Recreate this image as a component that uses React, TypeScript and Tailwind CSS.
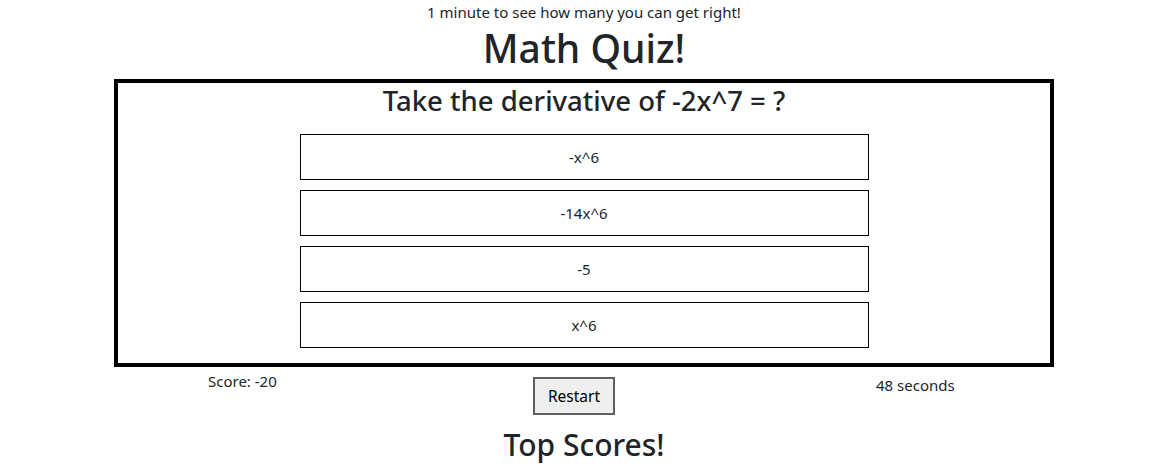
const options = ["-x^6", "-14x^6", "-5", "x^6"];

export default function App() {
  return (
    <div className="min-h-screen bg-white pl-[15px] text-[#212529] font-['Noto_Sans',sans-serif]">
      <div className="flex flex-col items-center">
        <p className="text-[15px] leading-6">1 minute to see how many you can get right!</p>
        <h1 className="text-[39px] font-medium leading-[48px] mb-[7px]">Math Quiz!</h1>

        <div className="w-[940px] border-4 border-black pb-[15px]">
          <h3 className="text-[27.5px] font-medium leading-[34px] text-center mt-[1px] mb-[16px]">
            Take the derivative of -2x^7 = ?
          </h3>
          <div className="flex flex-col items-center gap-[10px]">
            {options.map((o) => (
              <div
                key={o}
                className="w-[569px] h-[46px] border border-black flex items-center justify-center text-[15px]"
              >
                {o}
              </div>
            ))}
          </div>
        </div>

        <div className="w-[940px] grid grid-cols-[419px_82px_439px] items-start">
          <div className="pl-[94px] pt-[2px] text-[15px] leading-6">Score: -20</div>
          <button
            type="button"
            className="mt-[10px] h-[38px] pt-[2px] bg-[#efefef] border-2 border-[#5f5f5f] text-[15.5px] text-black"
          >
            Restart
          </button>
          <div className="pl-[261px] pt-[6px] text-[15px] leading-6">48 seconds</div>
        </div>

        <h3 className="text-[30px] font-medium leading-[36px] mt-[12px]">Top Scores!</h3>
      </div>
    </div>
  );
}
